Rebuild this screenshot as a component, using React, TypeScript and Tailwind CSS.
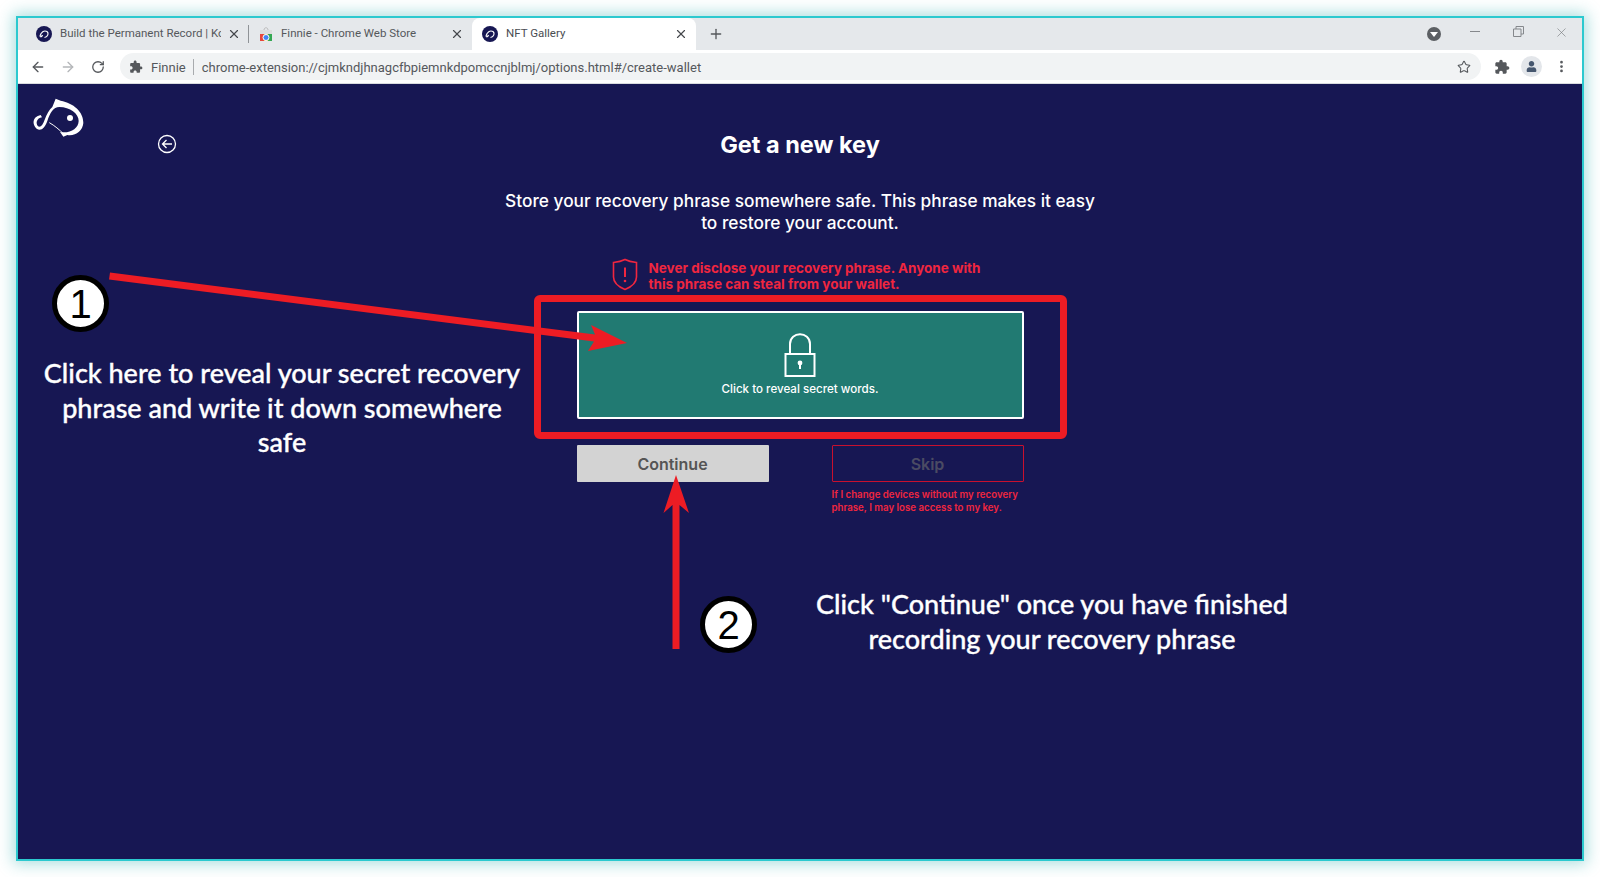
import { ArrowLeft, ArrowRight, RotateCw, Star, X, Plus, EllipsisVertical } from "lucide-react";
import { FaUser } from "react-icons/fa";

const uiFont = "font-['Roboto','Noto_Sans',sans-serif]";
const appFont = "font-['Inter','Noto_Sans',sans-serif]";

function Extension({ size, className }: { size: number; className: string }) {
  return (
    <svg width={size} height={size} viewBox="0 0 24 24" className={className} fill="currentColor">
      <path d="M20.5 11H19V7c0-1.1-.9-2-2-2h-4V3.5C13 2.12 11.88 1 10.5 1S8 2.12 8 3.5V5H4c-1.1 0-1.99.9-1.99 2v3.8H3.5c1.49 0 2.7 1.21 2.7 2.7s-1.21 2.7-2.7 2.7H2V20c0 1.1.9 2 2 2h3.8v-1.5c0-1.49 1.21-2.7 2.7-2.7 1.49 0 2.7 1.21 2.7 2.7V22H17c1.1 0 2-.9 2-2v-4h1.5c1.38 0 2.5-1.12 2.5-2.5S21.88 11 20.5 11z" />
    </svg>
  );
}

function KoiIcon() {
  return (
    <svg width="16" height="16" viewBox="0 0 16 16" className="shrink-0">
      <circle cx="8" cy="8" r="8" fill="#171753" />
      <path d="M4 10 C5 6 8 4 11 5.5 C13 7 12 11 8.5 11.5 M4 10 C4.5 11.5 6 10.5 6.5 9" fill="none" stroke="#fff" strokeWidth="1.2" />
    </svg>
  );
}

function StoreIcon() {
  return (
    <svg width="14" height="16" viewBox="0 0 14 16" className="shrink-0">
      <path d="M5 4 C5 1 9 1 9 4" fill="none" stroke="#bbb" strokeWidth="1" />
      <rect x="1" y="4" width="12" height="4" fill="#ddd" />
      <rect x="1" y="8" width="4" height="7" fill="#e8453c" />
      <rect x="5" y="8" width="4" height="7" fill="#fbbc05" />
      <rect x="9" y="8" width="4" height="7" fill="#34a853" />
      <circle cx="7" cy="11.5" r="3" fill="#4285f4" stroke="#fff" strokeWidth="1" />
    </svg>
  );
}

function Tab({ title, icon, active, w, pl, sep }: { title: string; icon: React.ReactNode; active?: boolean; w: string; pl: string; sep?: boolean }) {
  return (
    <div className={`${w} ${pl} relative flex h-[32px] shrink-0 items-center pr-[8px] ${active ? "rounded-t-[8px] bg-white" : ""}`}>
      {icon}
      <span className={`ml-[8px] min-w-0 flex-1 overflow-hidden whitespace-nowrap text-[11.5px] ${active ? "text-[#4a4d52]" : "text-[#55585c]"}`}>{title}</span>
      <X size={14} strokeWidth={2} className="ml-[6px] shrink-0 text-[#45484c]" />
      {sep && <div className="absolute right-0 top-[7px] h-[18px] w-px bg-[#8f9397]" />}
    </div>
  );
}

function Fish() {
  return (
    <svg width="170" height="80" viewBox="0 0 510 240" className="block">
      <path d="M97 66 L107 41 L122 47 C160 54 191 80 190 114 C188 138 166 154 142 150 L130 155 L120 141 C150 146 175 132 176 108 C176 86 150 66 118 66 C100 66 90 84 82 108 C74 130 62 140 50 131 C36 118 36 96 62 90 L66 97 C50 100 46 114 54 124 C62 128 68 120 74 104 C80 88 88 74 97 66 Z" fill="#fff" />
      <path d="M88 113 C104 122 118 134 132 148" fill="none" stroke="#fff" strokeWidth="3" />
      <circle cx="150" cy="99" r="9" fill="#fff" />
    </svg>
  );
}

function Shield() {
  return (
    <svg width="26" height="33" viewBox="0 0 26 33" className="shrink-0">
      <path d="M1.5 4.5 C6 4 10 3 13 1.5 C16 3 20 4 24.5 4.5 V19 C24.5 25 19 29 13 31.5 C7 29 1.5 25 1.5 19 Z" fill="none" stroke="#f0263f" strokeWidth="1.6" />
      <path d="M13 9.5 V19" stroke="#f0263f" strokeWidth="2" />
      <circle cx="13" cy="23" r="1.3" fill="#f0263f" />
    </svg>
  );
}

function Lock() {
  return (
    <svg width="32" height="44" viewBox="0 0 32 44" className="block">
      <path d="M6 21 V11 C6 -2 26 -2 26 11 V21" fill="none" stroke="#fff" strokeWidth="2" />
      <rect x="1.5" y="21" width="29" height="22" fill="none" stroke="#fff" strokeWidth="2" />
      <circle cx="16" cy="30" r="2.4" fill="#fff" />
      <rect x="15" y="30" width="2" height="6" fill="#fff" />
    </svg>
  );
}

function Badge({ n, className }: { n: string; className: string }) {
  return (
    <div className={`absolute flex h-[57px] w-[57px] items-center justify-center rounded-full border-[5px] border-black bg-white font-['Liberation_Sans',sans-serif] text-[40px] leading-none text-black ${className}`}>
      {n}
    </div>
  );
}

export default function App() {
  return (
    <div className="h-[877px] w-[1600px] overflow-hidden bg-white pl-[16px] pt-[16px]">
      <div className="flex h-[845px] w-[1568px] flex-col border-2 border-[#2cc9cf] shadow-[0_0_14px_3px_rgba(40,170,170,0.38)]">
        {/* Tab strip */}
        <div className={`flex h-[32px] shrink-0 items-center bg-[#e5e8eb] ${uiFont}`}>
          <Tab w="w-[231px]" pl="pl-[18px]" title="Build the Permanent Record | Koi" icon={<KoiIcon />} sep />
          <Tab w="w-[223px]" pl="pl-[10px]" title="Finnie - Chrome Web Store" icon={<StoreIcon />} />
          <Tab w="w-[224px]" pl="pl-[10px]" title="NFT Gallery" icon={<KoiIcon />} active />
          <Plus size={16} strokeWidth={2} className="ml-[12px] text-[#55585c]" />
          <div className="ml-auto flex items-center">
            <div className="flex h-[14px] w-[14px] items-center justify-center rounded-full bg-[#5c5f63]">
              <div className="h-0 w-0 border-x-[4px] border-t-[5px] border-x-transparent border-t-white" />
            </div>
            <div className="ml-[29px] mb-[6px] h-px w-[10px] bg-[#85888c]" />
            <svg width="11" height="11" viewBox="0 0 11 11" className="ml-[33px] mb-[6px]">
              <path d="M0.5 3 H8 V10.5 H0.5 Z M3 3 V0.5 H10.5 V8 H8" fill="none" stroke="#85888c" />
            </svg>
            <X size={15} strokeWidth={1} className="ml-[30px] mb-[4px] mr-[13px] text-[#75787c]" />
          </div>
        </div>
        {/* Toolbar */}
        <div className={`flex h-[34px] shrink-0 items-center bg-white border-b border-[#dadce0] ${uiFont}`}>
          <ArrowLeft size={16} strokeWidth={2} className="ml-[12px] text-[#55585c]" />
          <ArrowRight size={16} strokeWidth={2} className="ml-[14px] text-[#b4b6b9]" />
          <RotateCw size={14} strokeWidth={2.2} className="ml-[15px] text-[#55585c]" />
          <div className="ml-[15px] flex h-[27px] w-[1361px] items-center rounded-full bg-[#f1f3f4] pl-[9px] pr-[10px]">
            <Extension size={14} className="text-[#55585c]" />
            <span className="ml-[8px] pt-[2px] text-[13px] text-[#55585c]">Finnie</span>
            <div className="ml-[7px] h-[16px] w-px bg-[#a8abae]" />
            <span className="ml-[8px] pt-[2px] text-[13px] text-[#55585c]">chrome-extension://cjmkndjhnagcfbpiemnkdpomccnjblmj/options.html#/create-wallet</span>
            <Star size={14} strokeWidth={1.8} className="ml-auto text-[#55585c]" />
          </div>
          <Extension size={16} className="ml-[13px] text-[#55585c]" />
          <div className="ml-[11px] flex h-[21px] w-[21px] items-center justify-center rounded-full bg-[#e3e6ea]">
            <FaUser size={11} className="text-[#45566e]" />
          </div>
          <EllipsisVertical size={15} strokeWidth={2.4} className="ml-[12px] text-[#55585c]" />
        </div>
        {/* Page */}
        <div className={`relative flex-1 overflow-hidden bg-[#171753] ${appFont}`}>
          <div className="grid grid-cols-[1fr_auto_1fr]">
            <div className="flex items-start pl-[2px] pt-[1px]">
              <Fish />
              <svg width="20" height="20" viewBox="0 0 20 20" className="mt-[49px] ml-[-33px]">
                <circle cx="10" cy="10" r="8.5" fill="none" stroke="#fff" strokeWidth="1.3" />
                <path d="M15 10 H5.5 M9.5 6 L5.5 10 L9.5 14" fill="none" stroke="#fff" strokeWidth="1.3" />
              </svg>
            </div>
            <h1 className="pt-[45px] text-center text-[23.5px] font-bold leading-[32px] text-white">Get a new key</h1>
            <div />
          </div>
          <div className="mx-auto w-[447px]">
            <div className="ml-[-100px] mt-[25px] w-[647px] text-center text-[17.3px] font-medium leading-[22px] text-white">
              Store your recovery phrase somewhere safe. This phrase makes it easy
              <br />
              to restore your account.
            </div>
            <div className="mt-[24px] ml-[35px] flex w-[460px] items-start gap-[11px]">
              <Shield />
              <div className="whitespace-nowrap pt-[2px] text-[13.5px] font-bold leading-[16px] text-[#f0263f]">
                Never disclose your recovery phrase. Anyone with
                <br />
                this phrase can steal from your wallet.
              </div>
            </div>
            <div className="relative mt-[19px] flex h-[108px] flex-col items-center rounded-[2px] border-2 border-white bg-[#217a72] pt-[20px]">
              <Lock />
              <div className="mt-[4px] text-[11.6px] font-medium text-white">Click to reveal secret words.</div>
              <div className="absolute -bottom-[22px] -left-[45px] -right-[45px] -top-[18px] rounded-[6px] border-[7px] border-[#ed1c24]" />
            </div>
            <div className="mt-[26px] grid grid-cols-[192px_192px] justify-between">
              <div>
                <div className="flex h-[37px] items-center justify-center rounded-[1px] bg-[#d3d3d3] text-[16px] font-semibold text-[#555]">Continue</div>
              </div>
              <div>
                <div className="flex h-[37px] items-center justify-center rounded-[1px] border border-[#c8102e] text-[16px] font-semibold text-[#4b4b63]">Skip</div>
                <div className="mt-[6px] whitespace-nowrap text-[9.7px] font-semibold leading-[13px] text-[#f0263f]">
                  If I change devices without my recovery
                  <br />
                  phrase, I may lose access to my key.
                </div>
              </div>
            </div>
          </div>

          {/* Annotations over the page */}
          <svg viewBox="18 84 1564 775" className="pointer-events-none absolute inset-0 h-full w-full">
            <path d="M110 272.5 L595 334.5 L591 325 L627 343 L588 351 L594 341.5 L109 279.5 Z" fill="#ed1c24" />
            <path d="M679.5 649 H672.5 V505 L663.5 513 L676 475 L689 513 L679.5 505 Z" fill="#ed1c24" />
          </svg>
          <Badge n="1" className="left-[34px] top-[191px]" />
          <Badge n="2" className="left-[682px] top-[512px]" />
          <div className="absolute left-[24px] top-[272px] w-[480px] text-center font-['Lato',sans-serif] text-[27px] font-medium leading-[34.5px] text-white [-webkit-text-stroke:0.35px_#fff]">
            Click here to reveal your secret recovery phrase and write it down somewhere safe
          </div>
          <div className="absolute left-[782px] top-[503px] w-[504px] text-center font-['Lato',sans-serif] text-[27px] font-medium leading-[34.5px] text-white [-webkit-text-stroke:0.35px_#fff]">
            Click "Continue" once you have finished recording your recovery phrase
          </div>
        </div>
      </div>
    </div>
  );
}
